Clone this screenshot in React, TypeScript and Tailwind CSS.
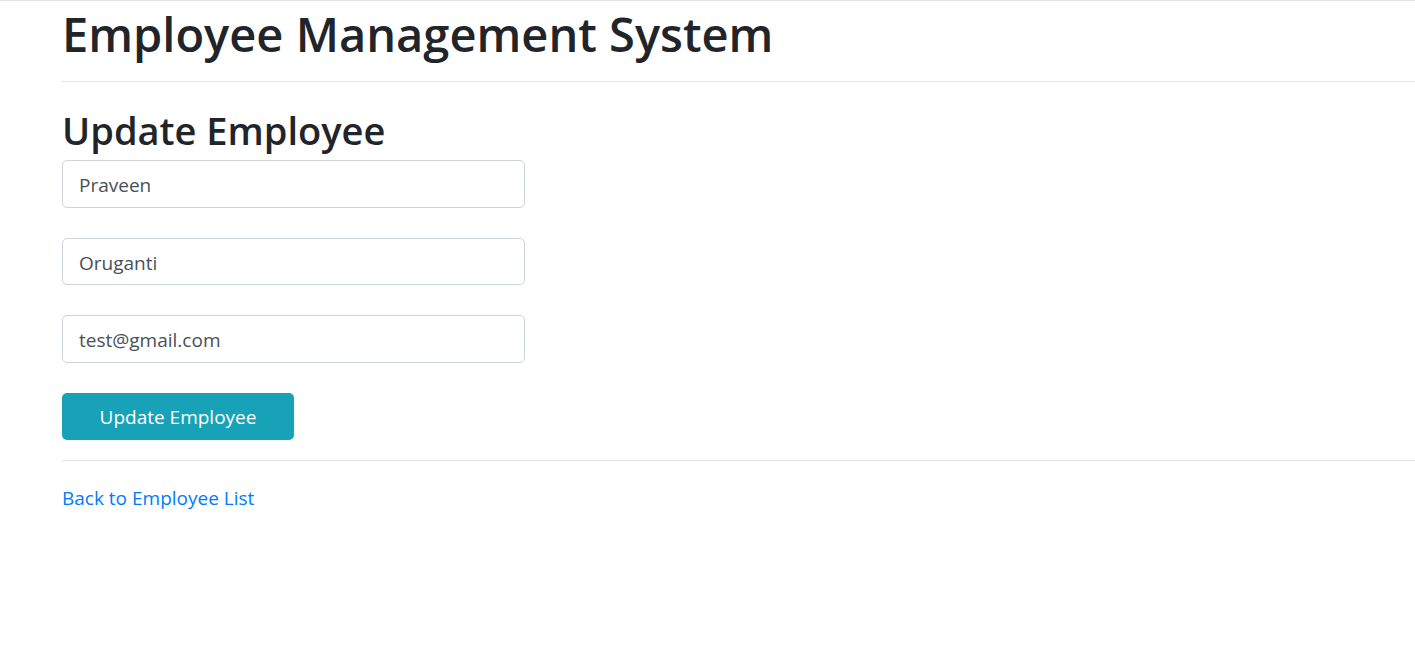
import React, { useState } from 'react';

export default function App() {
  const [firstName, setFirstName] = useState('Praveen');
  const [lastName, setLastName] = useState('Oruganti');
  const [email, setEmail] = useState('test@gmail.com');

  const inputClass =
    "w-[463px] h-[47.5px] px-[16px] pt-[3px] border border-[#ced4da] rounded-[5px] text-[19px] text-[#495057] bg-white outline-none font-['Open_Sans',sans-serif]";

  return (
    <div className="min-h-screen bg-white border-t border-[#dee2e6] text-[#212529] font-['Open_Sans',sans-serif]">
      <div className="pl-[62px]">
        <h1 className="text-[47px] leading-[60px] pt-[3px] font-semibold">Employee Management System</h1>
        <hr className="mt-[17px] border-[#e2e2e2]" />

        <h2 className="text-[38px] leading-[48px] mt-[24px] font-semibold">Update Employee</h2>
        <form className="mt-[6px] flex flex-col gap-[30px]" onSubmit={(e) => e.preventDefault()}>
          <input className={inputClass} value={firstName} onChange={(e) => setFirstName(e.target.value)} />
          <input className={inputClass} value={lastName} onChange={(e) => setLastName(e.target.value)} />
          <input className={inputClass} value={email} onChange={(e) => setEmail(e.target.value)} />
          <div>
            <button
              type="submit"
              className="w-[232px] h-[47px] pt-[3px] bg-[#17a2b8] text-white text-[19px] rounded-[5px]"
            >
              Update Employee
            </button>
          </div>
        </form>
        <hr className="mt-[20px] border-[#e2e2e2]" />
        <a href="#" className="inline-block mt-[23px] text-[19px] text-[#007bff]">
          Back to Employee List
        </a>
      </div>
    </div>
  );
}
